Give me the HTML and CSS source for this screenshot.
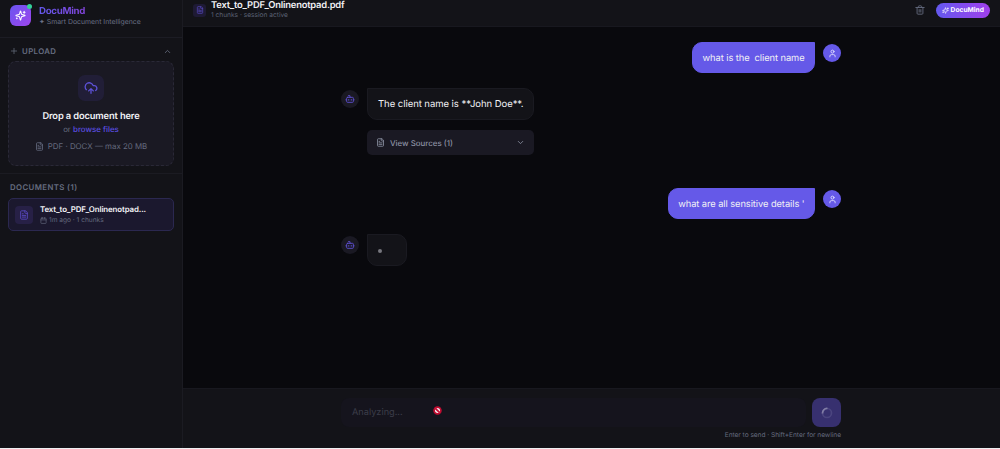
FILE: index.html
```html
<!DOCTYPE html>
<html lang="en">
<head>
  <meta charset="UTF-8" />
  <title>DocuMind</title>
  <link rel="stylesheet" href="styles.css">
</head>
<body>
  <svg class="sprite" width="0" height="0">
    <symbol id="sparkles" viewBox="0 0 24 24">
      <path d="M9.937 15.500A2 2 0 0 0 8.500 14.063l-6.135-1.582a.5.5 0 0 1 0-.962L8.500 9.936A2 2 0 0 0 9.937 8.500l1.582-6.135a.5.5 0 0 1 .963 0L14.063 8.500a2 2 0 0 0 1.437 1.437l6.135 1.581a.5.5 0 0 1 0 .964L15.500 14.063a2 2 0 0 0-1.437 1.437l-1.582 6.135a.5.5 0 0 1-.963 0z"/>
      <path d="M20 3v4M22 5h-4M4 17v2M5 18H3"/>
    </symbol>
    <symbol id="file" viewBox="0 0 24 24">
      <path d="M15 2H6a2 2 0 0 0-2 2v16a2 2 0 0 0 2 2h12a2 2 0 0 0 2-2V7z"/>
      <path d="M14 2v4a2 2 0 0 0 2 2h4M10 9H8M16 13H8M16 17H8"/>
    </symbol>
    <symbol id="user" viewBox="0 0 24 24">
      <circle cx="12" cy="7" r="4"/>
      <path d="M19 21v-2a4 4 0 0 0-4-4H9a4 4 0 0 0-4 4v2"/>
    </symbol>
    <symbol id="bot" viewBox="0 0 24 24">
      <path d="M12 8V4H8M2 14h2M20 14h2M15 13v2M9 13v2"/>
      <rect x="4" y="8" width="16" height="12" rx="2"/>
    </symbol>
    <symbol id="chevron" viewBox="0 0 24 24"><path d="M6 9l6 6 6-6"/></symbol>
  </svg>

  <div class="app">
    <aside class="sidebar">
      <div class="brand">
        <div class="logo">
          <svg class="icon" width="11" height="11"><use href="#sparkles"/></svg>
          <span class="online"></span>
        </div>
        <div>
          <div class="brand-name">DocuMind</div>
          <div class="brand-sub">✦ Smart Document Intelligence</div>
        </div>
      </div>

      <section class="upload">
        <div class="section-title">
          <svg class="icon" width="8" height="8" viewBox="0 0 24 24"><path d="M4 12h16M12 4v16"/></svg>
          <span>UPLOAD</span>
          <svg class="icon up" width="9" height="9"><use href="#chevron"/></svg>
        </div>
        <div class="dropzone">
          <div class="cloud">
            <svg class="icon" width="14" height="14" viewBox="0 0 24 24">
              <path d="M12 13v8M8 17l4-4 4 4M4 14.900A7 7 0 1 1 15.710 8h1.790a4.500 4.500 0 0 1 2.500 8.240"/>
            </svg>
          </div>
          <div class="drop-title">Drop a document here</div>
          <div class="drop-or">or <span>browse files</span></div>
          <div class="formats">
            <svg class="icon" width="9" height="9"><use href="#file"/></svg>
            <span>PDF · DOCX — max 20 MB</span>
          </div>
        </div>
      </section>

      <section class="documents">
        <div class="section-title">DOCUMENTS (1)</div>
        <div class="doc">
          <div class="doc-icon">
            <svg class="icon" width="10" height="10"><use href="#file"/></svg>
          </div>
          <div>
            <div class="doc-name">Text_to_PDF_Onlinenotpad...</div>
            <div class="doc-meta">
              <svg class="icon" width="7" height="7" viewBox="0 0 24 24">
                <rect x="3" y="4" width="18" height="18" rx="2"/><path d="M8 1v5M16 1v5M3 10h18"/>
              </svg>
              <span>1m ago · 1 chunks</span>
            </div>
          </div>
        </div>
      </section>
    </aside>

    <main class="main">
      <header class="header">
        <div class="header-icon">
          <svg class="icon" width="8" height="8"><use href="#file"/></svg>
        </div>
        <div class="header-text">
          <div class="header-title">Text_to_PDF_Onlinenotpad.pdf</div>
          <div class="header-sub">1 chunks · session active</div>
        </div>
        <svg class="icon trash" width="10" height="10" viewBox="0 0 24 24">
          <path d="M2 6h20M19 6v14a2 2 0 0 1-2 2H7a2 2 0 0 1-2-2V6M8 6V4a2 2 0 0 1 2-2h4a2 2 0 0 1 2 2v2M10 11v6M14 11v6"/>
        </svg>
        <div class="pill">
          <svg class="icon" width="7" height="7"><use href="#sparkles"/></svg>
          <span>DocuMind</span>
        </div>
      </header>

      <div class="chat">
        <div class="message mine first">
          <div class="bubble">what is the&nbsp; client name</div>
          <div class="avatar"><svg class="icon" width="9" height="9"><use href="#user"/></svg></div>
        </div>
        <div class="message">
          <div class="avatar"><svg class="icon" width="10" height="10"><use href="#bot"/></svg></div>
          <div class="answer">
            <div class="bubble">The client name is **John Doe**.</div>
            <div class="sources">
              <svg class="icon" width="9" height="9"><use href="#file"/></svg>
              <span>View Sources (1)</span>
              <svg class="icon" width="9" height="9"><use href="#chevron"/></svg>
            </div>
          </div>
        </div>
        <div class="message mine second">
          <div class="bubble">what are all sensitive details '</div>
          <div class="avatar"><svg class="icon" width="9" height="9"><use href="#user"/></svg></div>
        </div>
        <div class="message">
          <div class="avatar"><svg class="icon" width="10" height="10"><use href="#bot"/></svg></div>
          <div class="bubble typing"><span></span></div>
        </div>
      </div>

      <footer class="composer">
        <div class="composer-row">
          <div class="input">
            Analyzing...
            <svg class="blocked" width="9" height="9" viewBox="0 0 9 9">
              <circle cx="4.500" cy="4.500" r="3.400"/><path d="M2.300 2.300l4.400 4.400"/>
            </svg>
          </div>
          <div class="send">
            <svg width="12" height="12" viewBox="0 0 12 12">
              <circle class="track" cx="6" cy="6" r="4.500"/>
              <path class="arc" d="M1.500 6.500A4.500 4.500 0 0 1 6.500 1.500"/>
            </svg>
          </div>
        </div>
        <div class="hint">Enter to send · Shift+Enter for newline</div>
      </footer>
    </main>
  </div>
</body>
</html>
```
FILE: styles.css
```css
* {
  box-sizing: border-box;
}

body {
  margin: 0;
  background: #f0f0f3;
  color: #f1f1f5;
  font-family: Inter, "Liberation Sans", sans-serif;
  text-rendering: geometricPrecision;
  height: 449px;
  overflow: hidden;
}

.sprite {
  position: absolute;
}

.icon {
  display: block;
  flex-shrink: 0;
  fill: none;
  stroke: currentColor;
  stroke-width: 2.2;
  stroke-linecap: round;
  stroke-linejoin: round;
}

.app {
  display: flex;
  height: 448px;
  background: #09090d;
}

/* sidebar */

.sidebar {
  width: 183px;
  flex-shrink: 0;
  background: #131318;
  border-right: 1px solid #1b1b22;
}

.brand {
  display: flex;
  align-items: center;
  gap: 8px;
  height: 38px;
  padding: 0 10px 6px;
  border-bottom: 1px solid #1c1c24;
}

.logo {
  position: relative;
  display: grid;
  place-items: center;
  width: 21px;
  height: 21px;
  border-radius: 6px;
  background: linear-gradient(135deg, #6a55f0, #9d45ed);
  color: #fff;
}

.online {
  position: absolute;
  top: -1px;
  right: -1px;
  width: 5px;
  height: 5px;
  border-radius: 50%;
  background: #34d399;
}

.brand-name {
  width: max-content;
  font-size: 9.7px;
  font-weight: 700;
  letter-spacing: -0.3px;
  line-height: 11px;
  background: linear-gradient(90deg, #6459ed, #8344dc);
  background-clip: text;
  color: transparent;
}

.brand-sub {
  font-size: 6.9px;
  line-height: 9px;
  color: #6a7085;
}

.upload {
  height: 136px;
  padding: 7px 8px 0;
  border-bottom: 1px solid #1b1b22;
}

.section-title {
  display: flex;
  align-items: center;
  gap: 4px;
  height: 12px;
  padding: 0 2px;
  font-size: 7.8px;
  font-weight: 600;
  letter-spacing: 0.4px;
  color: #666d80;
}

.up {
  margin-left: auto;
  transform: rotate(180deg);
}

.dropzone {
  display: flex;
  flex-direction: column;
  align-items: center;
  height: 105px;
  margin-top: 4px;
  padding-top: 13px;
  border: 1px dashed #2a2937;
  border-radius: 8px;
  background: #1a1923;
}

.cloud {
  display: grid;
  place-items: center;
  width: 26px;
  height: 26px;
  border-radius: 7px;
  background: #211e37;
  color: #5d52d8;
}

.drop-title {
  margin-top: 9px;
  font-size: 9.3px;
  font-weight: 600;
  letter-spacing: -0.12px;
  line-height: 13px;
}

.drop-or {
  font-size: 7.9px;
  line-height: 12px;
  color: #646a7e;
}

.drop-or span {
  font-weight: 500;
  color: #5b4ee0;
}

.formats {
  display: flex;
  align-items: center;
  gap: 4px;
  margin-top: 6px;
  font-size: 7.9px;
  line-height: 10px;
  color: #646a7e;
}

.documents {
  padding: 7px 8px 0;
}

.doc {
  display: flex;
  align-items: center;
  gap: 7px;
  height: 33px;
  margin-top: 5px;
  padding: 0 6px;
  border: 1px solid #2b2850;
  border-radius: 5px;
  background: #1b182e;
}

.doc-icon {
  display: grid;
  place-items: center;
  width: 18px;
  height: 18px;
  border-radius: 4px;
  background: #272046;
  color: #5848c0;
}

.doc-name {
  font-size: 7.9px;
  font-weight: 600;
  letter-spacing: -0.12px;
  line-height: 11px;
}

.doc-meta {
  display: flex;
  align-items: center;
  gap: 2px;
  font-size: 6.6px;
  line-height: 11px;
  color: #646a7e;
}

/* main column */

.main {
  display: flex;
  flex: 1;
  flex-direction: column;
  min-width: 0;
}

.header {
  display: flex;
  align-items: center;
  height: 27px;
  padding: 0 10px 6px;
  background: #131318;
  border-bottom: 1px solid #18181f;
}

.header-icon {
  display: grid;
  place-items: center;
  width: 13px;
  height: 13px;
  border-radius: 3px;
  background: #1e1a34;
  color: #5546bb;
}

.header-text {
  flex: 1;
  margin-left: 5px;
}

.header-title {
  font-size: 9.4px;
  font-weight: 600;
  letter-spacing: -0.2px;
  line-height: 11px;
}

.header-sub {
  font-size: 6.6px;
  line-height: 9px;
  color: #5c6275;
}

.trash {
  color: #646a7e;
}

.pill {
  display: flex;
  align-items: center;
  gap: 2px;
  height: 15px;
  margin-left: 11px;
  padding: 0 6px;
  border-radius: 8px;
  background: linear-gradient(90deg, #6459ee, #a03fec);
  color: #fff;
  font-size: 6.7px;
  font-weight: 700;
}

.chat {
  width: 500px;
  height: 361px;
  margin: 0 159px 0 158px;
  padding-top: 15px;
}

.message {
  display: flex;
  gap: 8px;
}

.mine {
  justify-content: flex-end;
}

.first {
  margin-bottom: 15px;
}

.second {
  margin: 33px 0 15px;
}

.avatar {
  display: grid;
  place-items: center;
  width: 18px;
  height: 18px;
  margin-top: 2px;
  border-radius: 50%;
  background: #1a1923;
  color: #5d4fce;
}

.mine .avatar {
  background: #6559e8;
  color: #e7e5ff;
}

.bubble {
  height: 32px;
  padding: 0 10px;
  border: 1px solid #1a1a21;
  border-radius: 0 10px 10px 10px;
  background: #131318;
  font-size: 9.5px;
  letter-spacing: -0.05px;
  line-height: 31px;
  white-space: nowrap;
}

.mine .bubble {
  height: 31px;
  padding: 0 9.5px;
  border-color: #6559e8;
  border-radius: 10px 0 10px 10px;
  background: #6559e8;
  font-size: 9.3px;
  letter-spacing: -0.07px;
}

.sources {
  display: flex;
  align-items: center;
  gap: 5px;
  height: 25px;
  margin-top: 10px;
  padding: 0 9px;
  border-radius: 5px;
  background: #1a1923;
  color: #8b90a2;
  font-size: 7.9px;
  font-weight: 500;
}

.sources span {
  flex: 1;
}

.typing {
  display: flex;
  align-items: center;
  width: 40px;
}

.typing span {
  width: 4px;
  height: 4px;
  margin-top: 2px;
  border-radius: 50%;
  background: #77777e;
}

/* composer */

.composer {
  flex: 1;
  padding: 9px 159px 0 158px;
  background: #131318;
  border-top: 1px solid #18181f;
}

.composer-row {
  display: flex;
  gap: 6px;
}

.input {
  position: relative;
  flex: 1;
  height: 29px;
  padding-left: 11px;
  border-radius: 8px;
  background: #15141d;
  color: #3b3d49;
  font-size: 9.2px;
  line-height: 29px;
}

.blocked {
  position: absolute;
  top: 7.5px;
  left: 92px;
  fill: #f5eaee;
  stroke: #c20d32;
  stroke-width: 1.7;
}

.send {
  display: grid;
  place-items: center;
  width: 29px;
  height: 29px;
  border-radius: 8px;
  background: #37306f;
}

.send svg {
  fill: none;
  stroke-width: 1.7;
}

.track {
  stroke: #4b457f;
}

.arc {
  stroke: #817da5;
}

.hint {
  margin-top: 3px;
  font-size: 6.6px;
  letter-spacing: -0.04px;
  line-height: 10px;
  text-align: right;
  color: #646a7e;
}
```
